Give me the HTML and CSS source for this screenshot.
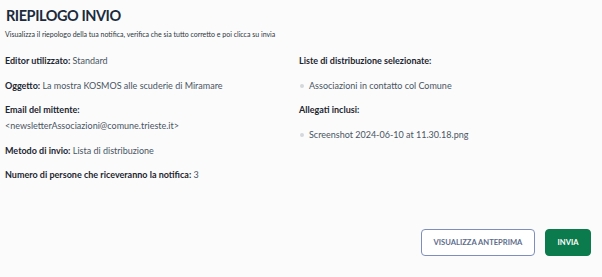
FILE: index.html
```html
<!DOCTYPE html>
<html lang="it">

<head>
  <meta charset="UTF-8">
  <title>Riepilogo invio</title>
  <link rel="stylesheet" href="styles.css">
</head>

<body>
  <!-- riepilogo -->
  <div class="riepilogo">
    <h2 class="titolo">RIEPILOGO INVIO</h2>
    <p class="sottotitolo">Visualizza il riepologo della tua notifica, verifica che sia tutto corretto e poi clicca su invia</p>

    <div class="colonne">
      <div class="col">
        <p><b>Editor utilizzato:</b> Standard</p>
        <p><b>Oggetto:</b> La mostra KOSMOS alle scuderie di Miramare</p>
        <p><b>Email del mittente:</b><br>&lt;newsletterAssociazioni@comune.trieste.it&gt;</p>
        <p><b>Metodo di invio:</b> Lista di distribuzione</p>
        <p><b>Numero di persone che riceveranno la notifica:</b> 3</p>
      </div>
      <div class="col">
        <p><b>Liste di distribuzione selezionate:</b></p>
        <ul>
          <li>Associazioni in contatto col Comune</li>
        </ul>
        <p><b>Allegati inclusi:</b></p>
        <ul>
          <li>Screenshot 2024-06-10 at 11.30.18.png</li>
        </ul>
      </div>
    </div>

    <!-- pulsanti -->
    <div class="azioni">
      <button class="btn btn-outline">VISUALIZZA ANTEPRIMA</button>
      <button class="btn btn-verde">INVIA</button>
    </div>
  </div>
</body>

</html>
```

FILE: styles.css
```css
* {
  margin: 0;
  padding: 0;
  box-sizing: border-box;
}

body {
  background: #fbfbfb;
  font-family: Lato, "Noto Sans", sans-serif;
  color: #4a5563;
}

.riepilogo {
  padding: 5px 11px 0 5px;
}

.titolo {
  font-size: 14.5px;
  line-height: 20px;
  font-weight: 700;
  letter-spacing: -0.45px;
  color: #1b2b3c;
  padding-left: 1px;
  margin-top: 1px;
}

.sottotitolo {
  font-size: 7px;
  line-height: 10px;
  margin-top: 3px;
  color: #2c3540;
}

.colonne {
  display: grid;
  grid-template-columns: 294px 1fr;
  margin-top: 14px;
}

.col p {
  font-size: 9px;
  line-height: 16px;
  margin-bottom: 8.5px;
}

.col b {
  color: #1d2631;
}

.col ul {
  list-style: none;
  margin-bottom: 8.5px;
}

.col li {
  font-size: 9px;
  line-height: 16px;
  padding-left: 10px;
  position: relative;
}

.col li::before {
  content: "";
  position: absolute;
  left: 1px;
  top: 6px;
  width: 4px;
  height: 4px;
  border-radius: 50%;
  background: #d4d7db;
}

.azioni {
  display: flex;
  justify-content: flex-end;
  gap: 10px;
  margin-top: 37px;
}

.btn {
  height: 27px;
  border-radius: 4px;
  font-family: Lato, "Noto Sans", sans-serif;
  font-size: 7.6px;
  font-weight: 700;
  cursor: pointer;
}

.btn-outline {
  width: 114px;
  background: #fff;
  border: 1px solid #7d8fba;
  color: #5d6d8c;
}

.btn-verde {
  width: 46px;
  background: #0b7b4d;
  border: 1px solid #0b7b4d;
  color: #fff;
}
```
